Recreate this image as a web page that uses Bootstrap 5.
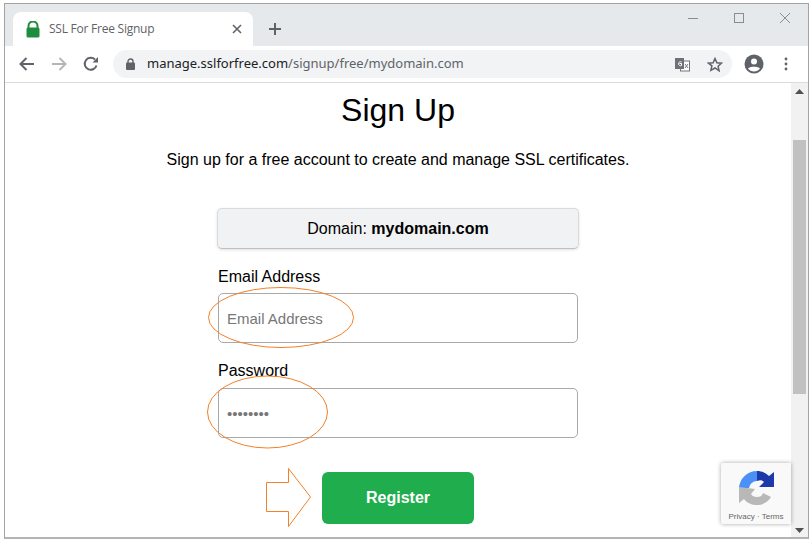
<!DOCTYPE html>
<html lang="en">
<head>
<meta charset="utf-8">
<title>SSL For Free Signup</title>
<link href="https://cdn.jsdelivr.net/npm/bootstrap@5.3.0/dist/css/bootstrap.min.css" rel="stylesheet">
<style>
html,body{height:100%;overflow:hidden;background:#fff;}
body{font-family:"Liberation Sans",Arial,sans-serif;color:#000;}
.win-frame{position:relative;margin:3px 0 0 4px;width:805px;height:536px;border:1px solid #a3a3a3;border-bottom:2px solid #b4b4b4;overflow:hidden;background:#fff;}
.tab-strip{height:42px;background:#e6e9ec;padding-left:8px;}
.tab-shape{width:240px;height:34px;background:#fff;border-radius:8px 8px 0 0;padding:0 11px 0 12px;font-family:"Open Sans","Noto Sans",sans-serif;font-size:12px;color:#5f6368;}
.tab-title{margin-left:8px;letter-spacing:-.02em;}
.new-tab{margin-left:15px;margin-top:18px;}
.win-ctrls{margin-left:auto;gap:34px;padding:8px 17px 0 0;}
.tool-row{height:36px;background:#fff;border-bottom:1px solid #dadce0;padding-left:14px;box-sizing:content-box;}
.nav-icons{gap:16px;width:94px;}
.omni{width:619px;height:28px;background:#f1f3f4;border-radius:14px;padding:0 9px 0 13px;font-family:"Noto Sans","Open Sans",sans-serif;font-size:13px;color:#5f6368;}
.omni-host{color:#202124;}
.omni-url{margin-left:12px;}
.omni-end{margin-left:auto;gap:17px;}
.tool-end{gap:20px;margin-left:12px;}
.page-area{height:456px;}
.page-main{width:787px;}
.head-title{font-size:32px;font-weight:400;line-height:38px;margin:8px 0 0;}
.head-sub{font-size:16px;line-height:20px;margin:21px 0 0;}
.domain-box{width:362px;height:41px;margin:38px auto 0;background:#f1f2f4;border:1px solid #d9dadd;border-bottom-color:#bfc0c4;border-radius:5px;box-shadow:0 1px 3px rgba(0,0,0,.12);font-size:16px;}
.signup-form{width:360px;margin:0 auto;}
.field-label{font-size:16px;line-height:20px;margin:0 0 6px 0;display:block;}
.email-group{margin-top:18px;}
.pass-group{margin-top:18px;}
.pass-group .field-label{margin-bottom:7px;}
.field-input.form-control{height:50px;border:1px solid #a9a9a9;border-radius:5px;font-size:15px;padding:0 8px;color:#777;box-shadow:none;}
.field-input::placeholder{color:#777;opacity:1;}
.go-btn.btn{display:block;width:152px;height:52px;margin:34px auto 0;background:#20ad4e;border:0;border-radius:6px;color:#fff;font-size:16px;font-weight:700;}
.scroll-track{width:17px;background:#f1f1f1;}
.scroll-up,.scroll-down{height:17px;}
.scroll-gap{height:40px;}
.scroll-thumb{width:13px;height:254px;background:#c1c1c1;margin-left:2px;}
.scroll-fill{flex:1;}
.markup{position:absolute;left:-5px;top:-4px;width:812px;height:542px;pointer-events:none;}
.captcha-badge{position:absolute;left:716px;top:459px;width:70px;height:61px;background:#f9f9f9;box-shadow:0 0 4px rgba(0,0,0,.35);border-radius:2px 0 0 2px;}
.captcha-terms{position:absolute;left:0;right:0;top:49px;text-align:center;font-size:8px;line-height:10px;color:#666;white-space:nowrap;}
.captcha-logo{position:absolute;left:17px;top:7px;}
</style>
</head>
<body>
<div class="win-frame">
  <div class="tab-strip d-flex align-items-end">
    <div class="tab-shape d-flex align-items-center">
      <svg width="16" height="17" viewBox="0 0 16 17"><path d="M3.500 7V5a4.500 4.500 0 0 1 9 0v2" fill="none" stroke="#1e8e3e" stroke-width="2"/><rect x="1.500" y="6.500" width="13" height="10" rx="1.500" fill="#1e8e3e"/></svg>
      <span class="tab-title">SSL For Free Signup</span>
      <svg class="ms-auto" width="10" height="10" viewBox="0 0 10 10"><path d="M1 1l8 8M9 1L1 9" stroke="#5f6368" stroke-width="1.600"/></svg>
    </div>
    <svg class="new-tab align-self-start" width="14" height="14" viewBox="0 0 14 14"><path d="M7 1v12M1 7h12" stroke="#5f6368" stroke-width="2"/></svg>
    <div class="win-ctrls d-flex align-self-start">
      <svg width="12" height="12" viewBox="0 0 12 12"><path d="M1 6.500h10" stroke="#8a8c8e"/></svg>
      <svg width="12" height="12" viewBox="0 0 12 12"><rect x="1.500" y="1.500" width="9" height="9" fill="none" stroke="#8a8c8e"/></svg>
      <svg width="12" height="12" viewBox="0 0 12 12"><path d="M1 1l10 10M11 1L1 11" stroke="#8a8c8e"/></svg>
    </div>
  </div>
  <div class="tool-row d-flex align-items-center">
    <div class="nav-icons d-flex align-items-center">
      <svg width="16" height="14" viewBox="0 0 16 14"><path d="M15 7H2M7.500 1 1.500 7l6 6" fill="none" stroke="#5f6368" stroke-width="2"/></svg>
      <svg width="16" height="14" viewBox="0 0 16 14"><path d="M1 7h13M8.500 1l6 6-6 6" fill="none" stroke="#b4b6b8" stroke-width="2"/></svg>
      <svg width="16" height="16" viewBox="0 0 16 16"><path d="M13.500 9.500A6 6 0 1 1 12 3.500" fill="none" stroke="#5f6368" stroke-width="2"/><path d="M9.500 6.500H15V1z" fill="#5f6368"/></svg>
    </div>
    <div class="omni d-flex align-items-center">
      <svg width="9" height="12" viewBox="0 0 9 12"><path d="M2 5V3.500a2.500 2.500 0 0 1 5 0V5" fill="none" stroke="#5f6368" stroke-width="1.400"/><rect y="4.500" width="9" height="7.500" rx="1" fill="#5f6368"/></svg>
      <span class="omni-url"><span class="omni-host">manage.sslforfree.com</span>/signup/free/mydomain.com</span>
      <div class="omni-end d-flex align-items-center">
        <svg width="15" height="15" viewBox="0 0 15 15"><rect x="5.500" y="4" width="9" height="10" fill="#fff" stroke="#777"/><rect x="0" y="1" width="9" height="11" fill="#6e7276"/><path d="M6.500 5A2 2 0 1 0 6.500 8.500V6.500H4.500" fill="none" stroke="#fff"/><path d="M10 7l3 4M13 7l-3 4" stroke="#777"/></svg>
        <svg width="16" height="15" viewBox="0 0 16 15"><path d="M8 1.500l1.900 4.200 4.600.5-3.400 3.100 1 4.500L8 11.000 3.900 13.300l1-4.500L1.500 6.200l4.600-.5z" fill="none" stroke="#5f6368" stroke-width="1.500"/></svg>
      </div>
    </div>
    <div class="tool-end d-flex align-items-center">
      <svg width="20" height="20" viewBox="0 0 20 20"><circle cx="10" cy="10" r="9.500" fill="#5f6368"/><circle cx="10" cy="7.500" r="3" fill="#fff"/><path d="M4 14.500c1.500-2.500 10.500-2.500 12 0-1.500 2-3.500 3-6 3s-4.500-1-6-3z" fill="#fff"/></svg>
      <svg width="4" height="14" viewBox="0 0 4 14"><circle cx="2" cy="2" r="1.400" fill="#5f6368"/><circle cx="2" cy="7" r="1.400" fill="#5f6368"/><circle cx="2" cy="12" r="1.400" fill="#5f6368"/></svg>
    </div>
  </div>
  <div class="page-area d-flex">
    <main class="page-main text-center">
      <h1 class="head-title">Sign Up</h1>
      <p class="head-sub">Sign up for a free account to create and manage SSL certificates.</p>
      <div class="domain-box d-flex align-items-center justify-content-center"><span>Domain: <strong>mydomain.com</strong></span></div>
      <form class="signup-form text-start">
        <div class="email-group">
          <label class="field-label" for="em">Email Address</label>
          <input id="em" class="form-control field-input" type="email" placeholder="Email Address">
        </div>
        <div class="pass-group">
          <label class="field-label" for="pw">Password</label>
          <input id="pw" class="form-control field-input" type="password" value="password">
        </div>
        <button type="button" class="btn go-btn">Register</button>
      </form>
    </main>
    <div class="scroll-track d-flex flex-column">
      <div class="scroll-up d-flex align-items-center justify-content-center"><svg width="9" height="5" viewBox="0 0 9 5"><path d="M4.500 0 9 5H0z" fill="#505050"/></svg></div>
      <div class="scroll-gap"></div>
      <div class="scroll-thumb"></div>
      <div class="scroll-fill"></div>
      <div class="scroll-down d-flex align-items-center justify-content-center"><svg width="9" height="5" viewBox="0 0 9 5"><path d="M0 0h9L4.500 5z" fill="#505050"/></svg></div>
    </div>
  </div>
  <div class="captcha-badge">
    <svg class="captcha-logo" width="38" height="38" viewBox="0 0 38 38">
      <path d="M19 1A18 18 0 0 0 1 18h10a8 8 0 0 1 8-7z" fill="#4a90f5"/>
      <path d="M19 1c5 0 9 2 12 5l5-4v15H21l5-5c-2-2-4-2-7-1z" fill="#1c3aa9"/>
      <path d="M1 17v16l5-4c3 4 8 6 13 6 6 0 11-3 14-8l-8-4c-1 3-3 4-6 4s-5-1-6-3l4-5z" fill="#b8b8b8"/>
    </svg>
    <div class="captcha-terms">Privacy · Terms</div>
  </div>
  <svg class="markup" viewBox="0 0 812 542">
    <ellipse cx="281" cy="317.500" rx="72.500" ry="30" fill="none" stroke="#f58025"/>
    <ellipse cx="267.500" cy="412" rx="60" ry="36" fill="none" stroke="#f58025"/>
    <path d="M266.500 482.500H288.500V468.500L310.500 497 288.500 526.500V511.500H266.500Z" fill="#fff" stroke="#f58025"/>
  </svg>
</div>
</body>
</html>
